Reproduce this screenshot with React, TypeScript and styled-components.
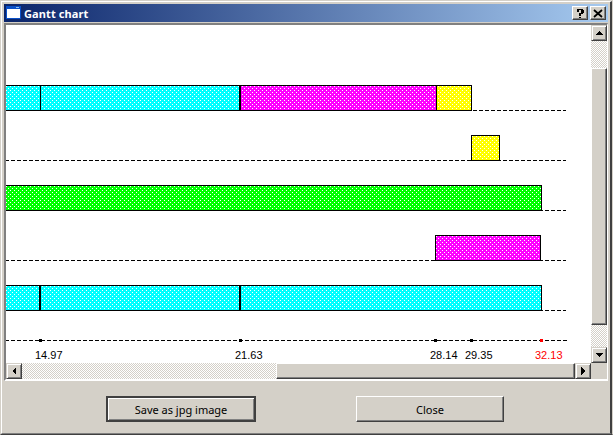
import React from "react";
import styled, { createGlobalStyle } from "styled-components";

const Global = createGlobalStyle`
  html, body { margin: 0; padding: 0; background: #d4d0c8; }
  body { width: 613px; height: 435px; overflow: hidden; font-family: "Liberation Sans", Arial, sans-serif; }
  * { box-sizing: border-box; }
`;

const Face = "#d4d0c8";
const hatch = `repeating-conic-gradient(#d4d0c8 0 25%, #ffffff 0 50%) 0 0 / 2px 2px`;
const dot = `conic-gradient(from 270deg at 1px 1px, #fff 25%, transparent 0)`;

const Win = styled.div`
  width: 613px;
  height: 435px;
  background: ${Face};
  border-top: 1px solid ${Face};
  border-left: 1px solid ${Face};
  border-right: 1px solid ${Face};
  border-bottom: 1px solid #404040;
  display: flex;
  flex-direction: column;
`;
const WinInner = styled.div`
  flex: 1;
  display: flex;
  flex-direction: column;
  border-top: 1px solid #fff;
  border-left: 1px solid #fff;
  border-right: 2px solid #404040;
  border-bottom: 1px solid #808080;
  padding: 2px;
  min-height: 0;
`;
const TitleBar = styled.div`
  height: 18px;
  flex: none;
  display: flex;
  align-items: center;
  padding: 0 2px;
  background: linear-gradient(90deg, #0a246a, #a6caf0);
`;
const TitleIcon = styled.svg`
  width: 16px;
  height: 16px;
  flex: none;
`;
const Title = styled.span`
  margin-left: 2px;
  color: #fff;
  font: bold 11px "Noto Sans", sans-serif;
  letter-spacing: 0.1px;
  flex: 1;
  white-space: nowrap;
`;
const CapButton = styled.div<{ $gap?: number }>`
  width: 16px;
  height: 14px;
  margin-left: ${(p) => p.$gap ?? 0}px;
  background: ${Face};
  border: 1px solid;
  border-color: #fff #404040 #404040 #fff;
  box-shadow: inset -1px -1px 0 #808080;
  display: flex;
  align-items: center;
  justify-content: center;
`;
const Sunken = styled.div`
  margin-top: 1px;
  height: 358px;
  flex: none;
  border-style: solid;
  border-width: 2px 1px 2px 2px;
  border-color: #808080 #fff #fff #808080;
  box-shadow: inset 1px 1px 0 #404040;
  display: grid;
  grid-template-columns: 585px 16px;
  grid-template-rows: 338px 16px;
  align-content: start;
`;
const Viewport = styled.div`
  background: #fff;
  overflow: hidden;
  padding-top: 36px;
  display: flex;
  flex-direction: column;
`;
const Row = styled.div<{ $indent?: number }>`
  width: 561px;
  height: 50px;
  flex: none;
  display: flex;
  align-items: flex-end;
  padding-left: ${(p) => p.$indent ?? 0}px;
  background: repeating-linear-gradient(90deg, #000 0 4px, transparent 4px 6px) -1px 100% / 100% 1px no-repeat;
`;
const Bar = styled.div<{ $w: number; $tone: string; $right?: number; $left?: boolean; $shift?: number }>`
  width: ${(p) => p.$w}px;
  height: 26px;
  flex: none;
  background:
    ${dot} ${(p) => p.$shift ?? 0}px 0 / 4px 4px,
    ${dot} ${(p) => (p.$shift ?? 0) + 2}px 2px / 4px 4px,
    ${(p) => p.$tone};
  border-style: solid;
  border-color: #000;
  border-width: 1px ${(p) => p.$right ?? 1}px 1px ${(p) => (p.$left ? 1 : 0)}px;
`;
const Axis = styled.svg`
  display: block;
  width: 585px;
  height: 52px;
  flex: none;
  shape-rendering: crispEdges;
`;
const Label = styled.text<{ $red?: boolean }>`
  font: 11px "Liberation Sans", Arial, sans-serif;
  fill: ${(p) => (p.$red ? "#ff0000" : "#000000")};
`;
const VBar = styled.div`
  display: flex;
  flex-direction: column;
  height: 338px;
`;
const HBar = styled.div`
  display: flex;
  width: 585px;
  height: 16px;
`;
const Track = styled.div<{ $size: number; $vertical?: boolean }>`
  flex: none;
  ${(p) => (p.$vertical ? `height: ${p.$size}px;` : `width: ${p.$size}px;`)}
  background: ${hatch};
`;
const Thumb = styled.div`
  flex: 1;
  background: ${Face};
  border: 1px solid;
  border-color: #fff #404040 #404040 #fff;
  box-shadow: inset -1px -1px 0 #808080;
`;
const ArrowBtn = styled.div`
  flex: none;
  width: 16px;
  height: 16px;
  background: ${Face};
  border: 1px solid;
  border-color: ${Face} #404040 #404040 ${Face};
  box-shadow: inset 1px 1px 0 #fff, inset -1px -1px 0 #808080;
  display: flex;
  align-items: center;
  justify-content: center;
`;
const Corner = styled.div`
  background: ${Face};
`;
const Footer = styled.div`
  flex: 1;
  display: flex;
  align-items: flex-start;
  padding: 15px 0 0 102px;
  gap: 100px;
`;
const Button = styled.button<{ $default?: boolean; $w: number }>`
  width: ${(p) => p.$w}px;
  height: 26px;
  padding: 0;
  background: ${Face};
  color: #000;
  font: 11px "Noto Sans", sans-serif;
  border: ${(p) => (p.$default ? "2px" : "1px")} solid;
  border-color: ${(p) => (p.$default ? "#404040" : "#fff #404040 #404040 #fff")};
  box-shadow: ${(p) =>
    p.$default
      ? "inset 1px 1px 0 #fff, inset -1px -1px 0 #808080"
      : "inset -1px -1px 0 #808080"};
`;

const CYAN = "#00ffff";
const MAGENTA = "#ff00ff";
const YELLOW = "#ffff00";
const GREEN = "#00ff00";

const ticks = [
  { x: 34, label: "14.97", lx: 29 },
  { x: 234, label: "21.63", lx: 229 },
  { x: 429, label: "28.14", lx: 424 },
  { x: 465, label: "29.35", lx: 459 },
  { x: 535, label: "32.13", lx: 529, red: true },
];
const Arrow = ({ d }: { d: string }) => (
  <svg width="8" height="8" viewBox="0 0 8 8" shapeRendering="crispEdges">
    <path d={d} fill="#000" />
  </svg>
);

export default function App() {
  return (
    <>
      <Global />
      <Win>
        <WinInner>
          <TitleBar>
            <TitleIcon viewBox="0 0 16 16" shapeRendering="crispEdges">
              <rect x="0" y="1" width="15" height="13" fill="#0a50c8" />
              <rect x="1" y="4" width="13" height="9" fill="#fff" />
              <rect x="10" y="2" width="3" height="1" fill="#8cc0f0" />
            </TitleIcon>
            <Title>Gantt chart</Title>
            <CapButton>
              <svg width="10" height="10" viewBox="0 0 10 10" shapeRendering="crispEdges">
                <path d="M2 1h6v1h1v3H8v1H6v2H4V5h2V2H4v2H2V2h0zM4 8.5h2V10H4z" fill="#000" />
              </svg>
            </CapButton>
            <CapButton $gap={2}>
              <svg width="10" height="9" viewBox="0 0 10 9">
                <path d="M1 1l8 7M9 1l-8 7" stroke="#000" strokeWidth="1.8" fill="none" />
              </svg>
            </CapButton>
          </TitleBar>
          <Sunken>
            <Viewport>
              <Row>
                <Bar $w={35} $tone={CYAN} />
                <Bar $w={200} $tone={CYAN} $right={2} $shift={1} />
                <Bar $w={196} $tone={MAGENTA} $shift={1} />
                <Bar $w={35} $tone={YELLOW} $shift={1} />
              </Row>
              <Row $indent={465}>
                <Bar $w={29} $tone={YELLOW} $left />
              </Row>
              <Row>
                <Bar $w={536} $tone={GREEN} />
              </Row>
              <Row $indent={429}>
                <Bar $w={106} $tone={MAGENTA} $left />
              </Row>
              <Row>
                <Bar $w={35} $tone={CYAN} $right={2} />
                <Bar $w={200} $tone={CYAN} $right={2} $shift={1} />
                <Bar $w={301} $tone={CYAN} $shift={1} />
              </Row>
              <Axis viewBox="0 0 585 52">
                <line x1="0" x2="561" y1="29.5" y2="29.5" stroke="#000" strokeDasharray="4 2" strokeDashoffset="1" />
                {ticks.map((t) => (
                  <rect key={t.x} x={t.x - 1} y={28} width="3" height="3" fill={t.red ? "#ff0000" : "#000"} />
                ))}
                {ticks.map((t) => (
                  <Label key={t.label} x={t.lx} y={48} $red={t.red}>
                    {t.label}
                  </Label>
                ))}
              </Axis>
            </Viewport>
            <VBar>
              <ArrowBtn><Arrow d="M4 2L8 6H0z" /></ArrowBtn>
              <Track $vertical $size={27} />
              <Thumb />
              <Track $vertical $size={22} />
              <ArrowBtn><Arrow d="M0 2H8L4 6z" /></ArrowBtn>
            </VBar>
            <HBar>
              <ArrowBtn><Arrow d="M2 4L6 0V8z" /></ArrowBtn>
              <Track $size={254} />
              <Thumb />
              <ArrowBtn><Arrow d="M2 0L6 4L2 8z" /></ArrowBtn>
            </HBar>
            <Corner />
          </Sunken>
          <Footer>
            <Button $default $w={150}>Save as jpg image</Button>
            <Button $w={148}>Close</Button>
          </Footer>
        </WinInner>
      </Win>
    </>
  );
}
